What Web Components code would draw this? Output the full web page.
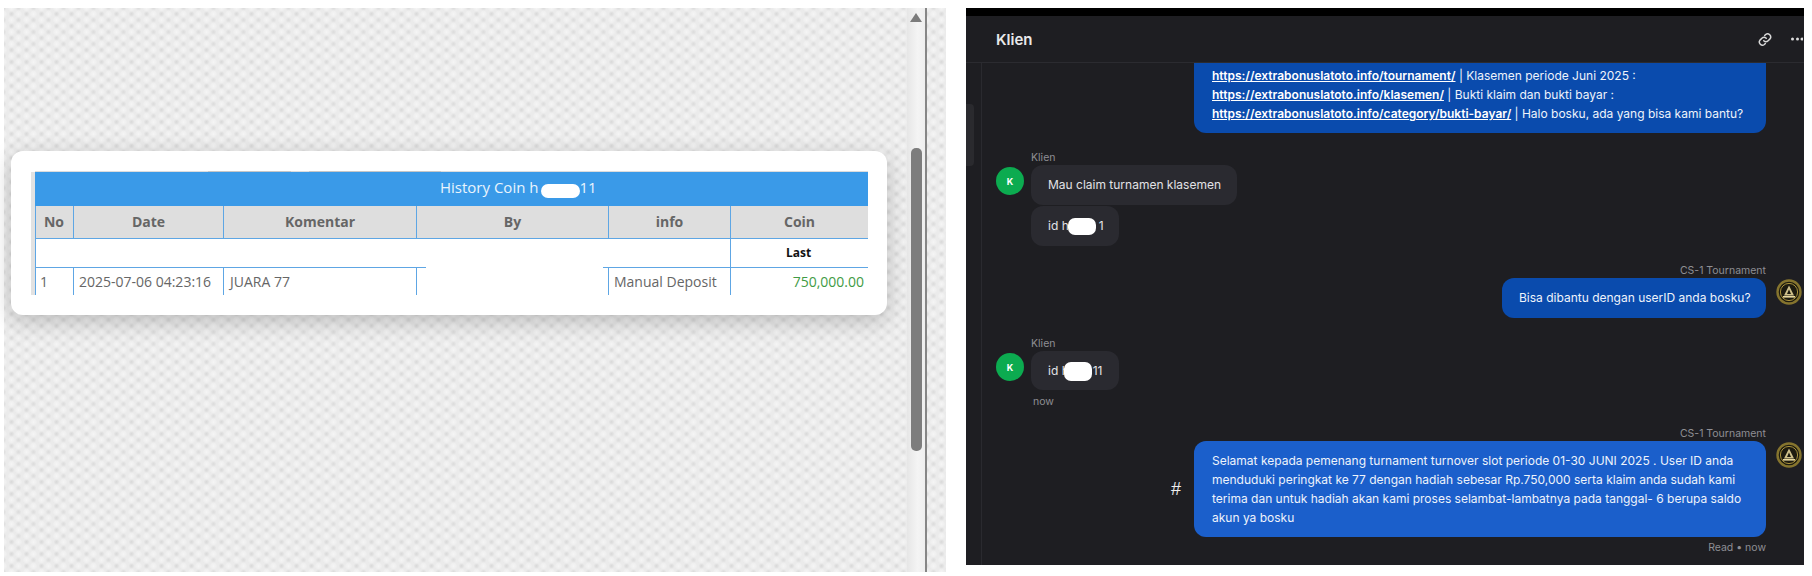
<!DOCTYPE html>
<html lang="id">
<head>
<meta charset="utf-8">
<title>History Coin / Klien</title>
<style>
  html, body { margin: 0; padding: 0; background: #fff; }
  body { width: 1812px; height: 576px; overflow: hidden; font-family: "Inter", "Liberation Sans", sans-serif; }
  #shot { display: flex; width: 1812px; height: 576px; padding-top: 8px; box-sizing: border-box; align-items: flex-start; }
</style>
</head>
<body>
<div id="shot">
  <coin-panel>
    <coin-table></coin-table>
  </coin-panel>
  <chat-panel title-text="Klien">
    <chat-bubble side="out" tone="dark" clip>
      <a>https://extrabonuslatoto.info/tournament/</a> | Klasemen periode Juni 2025 :<br>
      <a>https://extrabonuslatoto.info/klasemen/</a> | Bukti klaim dan bukti bayar :<br>
      <a>https://extrabonuslatoto.info/category/bukti-bayar/</a> | Halo bosku, ada yang bisa kami bantu?
    </chat-bubble>
    <chat-group side="in" name="Klien" style="margin-top:16px">
      <chat-bubble side="in" style="padding-right:16px">Mau claim turnamen klasemen</chat-bubble>
      <chat-bubble side="in" style="margin-top:1px;width:88px;white-space:nowrap">id h<redact-mask w="28" h="17" l="-1" r="3"></redact-mask>1</chat-bubble>
    </chat-group>
    <chat-group side="out" name="CS-1 Tournament" style="margin-top:16px">
      <chat-bubble side="out" tone="dark" style="padding:10px 17px 11px 17px;width:264px;white-space:nowrap">Bisa dibantu dengan userID anda bosku?</chat-bubble>
    </chat-group>
    <chat-group side="in" name="Klien" meta="now" style="margin-top:17px">
      <chat-bubble side="in" style="width:88px;padding-bottom:10px;white-space:nowrap">id h<redact-mask w="28" h="19" l="-5" r="1"></redact-mask>11</chat-bubble>
    </chat-group>
    <chat-group side="out" name="CS-1 Tournament" meta="Read • now" hash style="margin-top:17px;--meta-gap:4px">
      <chat-bubble side="out" tone="bright">Selamat kepada pemenang turnament turnover slot periode 01-30 JUNI 2025 . User ID anda menduduki peringkat ke 77 dengan hadiah sebesar Rp.750,000 serta klaim anda sudah kami terima dan untuk hadiah akan kami proses selambat-lambatnya pada tanggal- 6 berupa saldo akun ya bosku</chat-bubble>
    </chat-group>
  </chat-panel>
</div>

<script>
// small helper so every element below is set up the same way
function shadow (el, html) {
  el.attachShadow({ mode: 'open' })
  el.shadowRoot.innerHTML = html
}

customElements.define('redact-mask', class extends HTMLElement {
  connectedCallback () {
    const w = this.getAttribute('w') || 30
    const h = this.getAttribute('h') || 14
    const l = this.getAttribute('l') || 0
    const r = this.getAttribute('r') || 0
    const t = this.getAttribute('t') || 0
    shadow(this, `<style>
      :host { display: inline-block; vertical-align: middle; width: ${w}px; height: ${h}px;
        margin: -4px ${r}px -4px ${l}px; background: #fff; border-radius: 7px; position: relative; top: ${t}px; }
    </style>`)
  }
})

customElements.define('coin-panel', class extends HTMLElement {
  connectedCallback () {
    shadow(this, `<style>
      :host { display: flex; width: 942px; height: 564px; margin-left: 4px; flex: none; position: relative;
        background-color: #ebebeb;
        background-image:
          radial-gradient(circle at 50% 50%, #d7d7d7 0, transparent 3px),
          radial-gradient(circle at 50% 50%, #f6f6f6 0, transparent 4px),
          radial-gradient(circle at 50% 50%, #dadada 0, transparent 3px),
          radial-gradient(circle at 50% 50%, #f6f6f6 0, transparent 4px);
        background-size: 15px 12px;
        background-position: 0 0, 7px 0, 7px 6px, 0 6px;
      }
      .main { width: 903px; flex: none; padding: 143px 0 0 7px; box-sizing: border-box; }
      .card { width: 876px; height: 164px; box-sizing: border-box; background: #fff; border-radius: 12px;
        padding: 21px 19px 0 20px; box-shadow: 0 6px 22px rgba(0,0,0,.22); }
      .bar { width: 18px; flex: none; background: linear-gradient(90deg, #e6e6e6, #f4f4f4 60%, #eee); display: flex; flex-direction: column; align-items: center; }
      .arrow { width: 0; height: 0; margin-top: 5px; border: 6px solid transparent; border-top: 0; border-bottom: 9px solid #7c7c7c; }
      .thumb { width: 11px; height: 303px; margin-top: 126px; background: #7d7d7d; border-radius: 5px; }
      .rule { width: 2px; flex: none; background: #868686; }
      .rest { width: 19px; flex: none; }
    </style>
    <div class="main"><div class="card"><slot></slot></div></div>
    <div class="bar"><div class="arrow"></div><div class="thumb"></div></div>
    <div class="rule"></div>
    <div class="rest"></div>`)
  }
})

customElements.define('coin-table', class extends HTMLElement {
  connectedCallback () {
    shadow(this, `<style>
      :host { display: block; position: relative; width: 837px; font-family: "Open Sans", "Liberation Sans", sans-serif; color: #666;
        border-left: 4px solid #e2e2e2; box-sizing: border-box; }
      .title { height: 34px; background: #3a9ae8; color: #e9f4fd; font-size: 15px; line-height: 31px; padding-left: 405px; white-space: nowrap; box-shadow: 0 -1px #dcdcdc; }
      .row { display: grid; grid-template-columns: 38px 150px 193px 192px 122px 138px; box-shadow: inset 1px 0 #5ea6e4; }
      .head { height: 33px; background: #dedede; border-bottom: 1px solid #5ea6e4; box-sizing: border-box; font-weight: 700; font-size: 14px; }
      .head div { line-height: 32px; text-align: center; border-left: 1px solid #5ea6e4; }
      .sub { height: 29px; border-bottom: 1px solid #5ea6e4; box-sizing: border-box; font-weight: 700; font-size: 12px; color: #111; }
      .sub .gap { grid-column: span 5; }
      .sub .last { border-left: 1px solid #5ea6e4; line-height: 28px; text-align: center; padding-right: 2px; }
      .data { height: 27px; font-size: 14px; line-height: 28px; }
      .data div { border-left: 1px solid #5ea6e4; padding-left: 6px; white-space: nowrap; overflow: hidden; }
      .data .first { border-left: 0; padding-left: 5px; }
      .data .info { padding-left: 5px; }
      .data .date { padding-left: 5px; }
      .data .coin { text-align: right; padding: 0 4px 0 0; color: #3f9b45; }
      /* white patch that hides the By column in the reference */
      .patch { position: absolute; left: 391px; top: 95px; width: 177px; height: 27px; background: #fff; }
      /* bits of the blurred page behind that show above the title bar */
      .ghost { position: absolute; top: -1px; height: 1px; background: #c6c6c6; }
    </style>
    <div class="ghost" style="left:173px;width:83px"></div>
    <div class="ghost" style="left:274px;width:132px"></div>
    <div class="title">History Coin h<redact-mask w="39" h="14" l="3" r="-1" t="2"></redact-mask>11</div>
    <div class="row head"><div style="border-left:0">No</div><div>Date</div><div>Komentar</div><div>By</div><div>info</div><div>Coin</div></div>
    <div class="row sub"><div class="gap"></div><div class="last">Last</div></div>
    <div class="row data"><div class="first">1</div><div class="date">2025-07-06 04:23:16</div><div>JUARA 77</div><div></div><div class="info">Manual Deposit</div><div class="coin">750,000.00</div></div>
    <div class="patch"></div>`)
  }
})

customElements.define('chat-panel', class extends HTMLElement {
  connectedCallback () {
    const title = this.getAttribute('title-text')
    shadow(this, `<style>
      :host { display: flex; flex-direction: column; width: 838px; height: 557px; margin-left: 20px; flex: none; background: #1e1e22; color: #e8e8ea; position: relative; overflow: hidden; }
      .top { height: 8px; background: #000; flex: none; }
      header { height: 46px; flex: none; display: flex; align-items: center; padding: 0 1px 0 30px; border-bottom: 1px solid #2b2b30; font-size: 15px; font-weight: 600; box-sizing: content-box; }
      header span { flex: 1; }
      header svg { display: block; }
      .dots { margin-left: 18px; }
      .body { flex: 1; display: flex; min-height: 0; }
      .rail { width: 15px; flex: none; border-right: 1px solid #2a2a2f; position: relative; }
      .tab { position: absolute; left: 0; top: 41px; width: 8px; height: 62px; background: #2a2a2e; border-radius: 0 4px 4px 0; }
      .msgs { flex: 1; padding: 0 2px 0 14px; min-width: 0; display: flex; flex-direction: column; }
    </style>
    <div class="top"></div>
    <header><span>${title}</span>
      <svg width="16" height="15" viewBox="0 0 24 24" fill="none" stroke="#d8d8d8" stroke-width="2.4" stroke-linecap="round" stroke-linejoin="round"><path d="M10 14a5 5 0 0 0 7 0l3-3a5 5 0 0 0-7-7l-1.5 1.5"/><path d="M14 10a5 5 0 0 0-7 0l-3 3a5 5 0 0 0 7 7l1.5-1.5"/></svg>
      <svg class="dots" width="12" height="4" viewBox="0 0 12 4" fill="#dcdcdc"><circle cx="1.5" cy="2" r="1.5"/><circle cx="6.5" cy="2" r="1.5"/><circle cx="11" cy="2" r="1.5"/></svg>
    </header>
    <div class="body"><div class="rail"><div class="tab"></div></div><div class="msgs"><slot></slot></div></div>`)
  }
})

customElements.define('chat-group', class extends HTMLElement {
  connectedCallback () {
    const side = this.getAttribute('side')
    const name = this.getAttribute('name')
    const meta = this.getAttribute('meta')
    const hash = this.hasAttribute('hash')
    const avatar = `<svg class="av" width="26" height="26" viewBox="0 0 26 26"><circle cx="13" cy="13" r="11.5" fill="#1d1b10" stroke="#85742e" stroke-width="2.4"/><circle cx="13" cy="13" r="8.6" fill="none" stroke="#a8913c" stroke-width="1"/><path d="M13 6.5l5 10h-10z" fill="#cfc08a"/><path d="M13 10.5l2 4.5h-4z" fill="#1d1b10"/><path d="M7 17h12v1.6h-12z" fill="#e8d9a0"/></svg>`
    const left = side === 'in' ? '<div class="k">K</div>' : ''
    const right = side === 'out' ? avatar : ''
    shadow(this, `<style>
      :host { display: block; position: relative; }
      .name { font-size: 10.5px; line-height: 15px; padding-top: 1px; color: #8e8e94; }
      .line { display: flex; align-items: flex-start; position: relative; }
      .stack { display: flex; flex-direction: column; }
      .av { flex: none; display: block; margin: 1px 0 0 10px; filter: blur(.4px); }
      .k { flex: none; width: 28px; height: 28px; border-radius: 50%; background: #0cab50; color: #fff; font-size: 9px; font-weight: 700; display: flex; align-items: center; justify-content: center; margin: 2px 7px 0 0; }
      .meta { font-size: 10.5px; line-height: 13px; color: #8e8e94; margin-top: var(--meta-gap, 5px); }
      :host([side=in]) .name { margin-left: 35px; }
      :host([side=in]) .meta { margin-left: 37px; }
      :host([side=out]) .name, :host([side=out]) .meta { text-align: right; margin-right: 36px; }
      :host([side=out]) .line { justify-content: flex-end; }
      .hash { align-self: center; font-size: 18px; margin-right: 13px; color: #eee; font-family: "Liberation Sans", sans-serif; }
    </style>
    <div class="name">${name}</div>
    <div class="line">${left}${hash ? '<span class="hash">#</span>' : ''}<div class="stack"><slot></slot></div>${right}</div>
    ${meta ? `<div class="meta">${meta}</div>` : ''}`)
  }
})

customElements.define('chat-bubble', class extends HTMLElement {
  connectedCallback () {
    shadow(this, `<style>
      :host { display: block; width: fit-content; box-sizing: border-box; font-size: 12px; line-height: 19px; padding: 10px 17px 11px; border-radius: 12px; background: #2a2a30; color: #e2e2e6; }
      :host([side=out]) { color: #eef3fb; }
      :host([tone=dark]) { background: #0a4bad; }
      :host([tone=bright]) { background: #1b5fcb; width: 572px; padding: 10px 18px; }
      :host([clip]) { width: 572px; margin: 0 36px 0 auto; border-radius: 0 0 12px 12px; padding: 3px 18px 10px; }
      ::slotted(a) { color: #fff; font-weight: 600; text-decoration: underline; }
    </style><slot></slot>`)
  }
})
</script>
</body>
</html>
